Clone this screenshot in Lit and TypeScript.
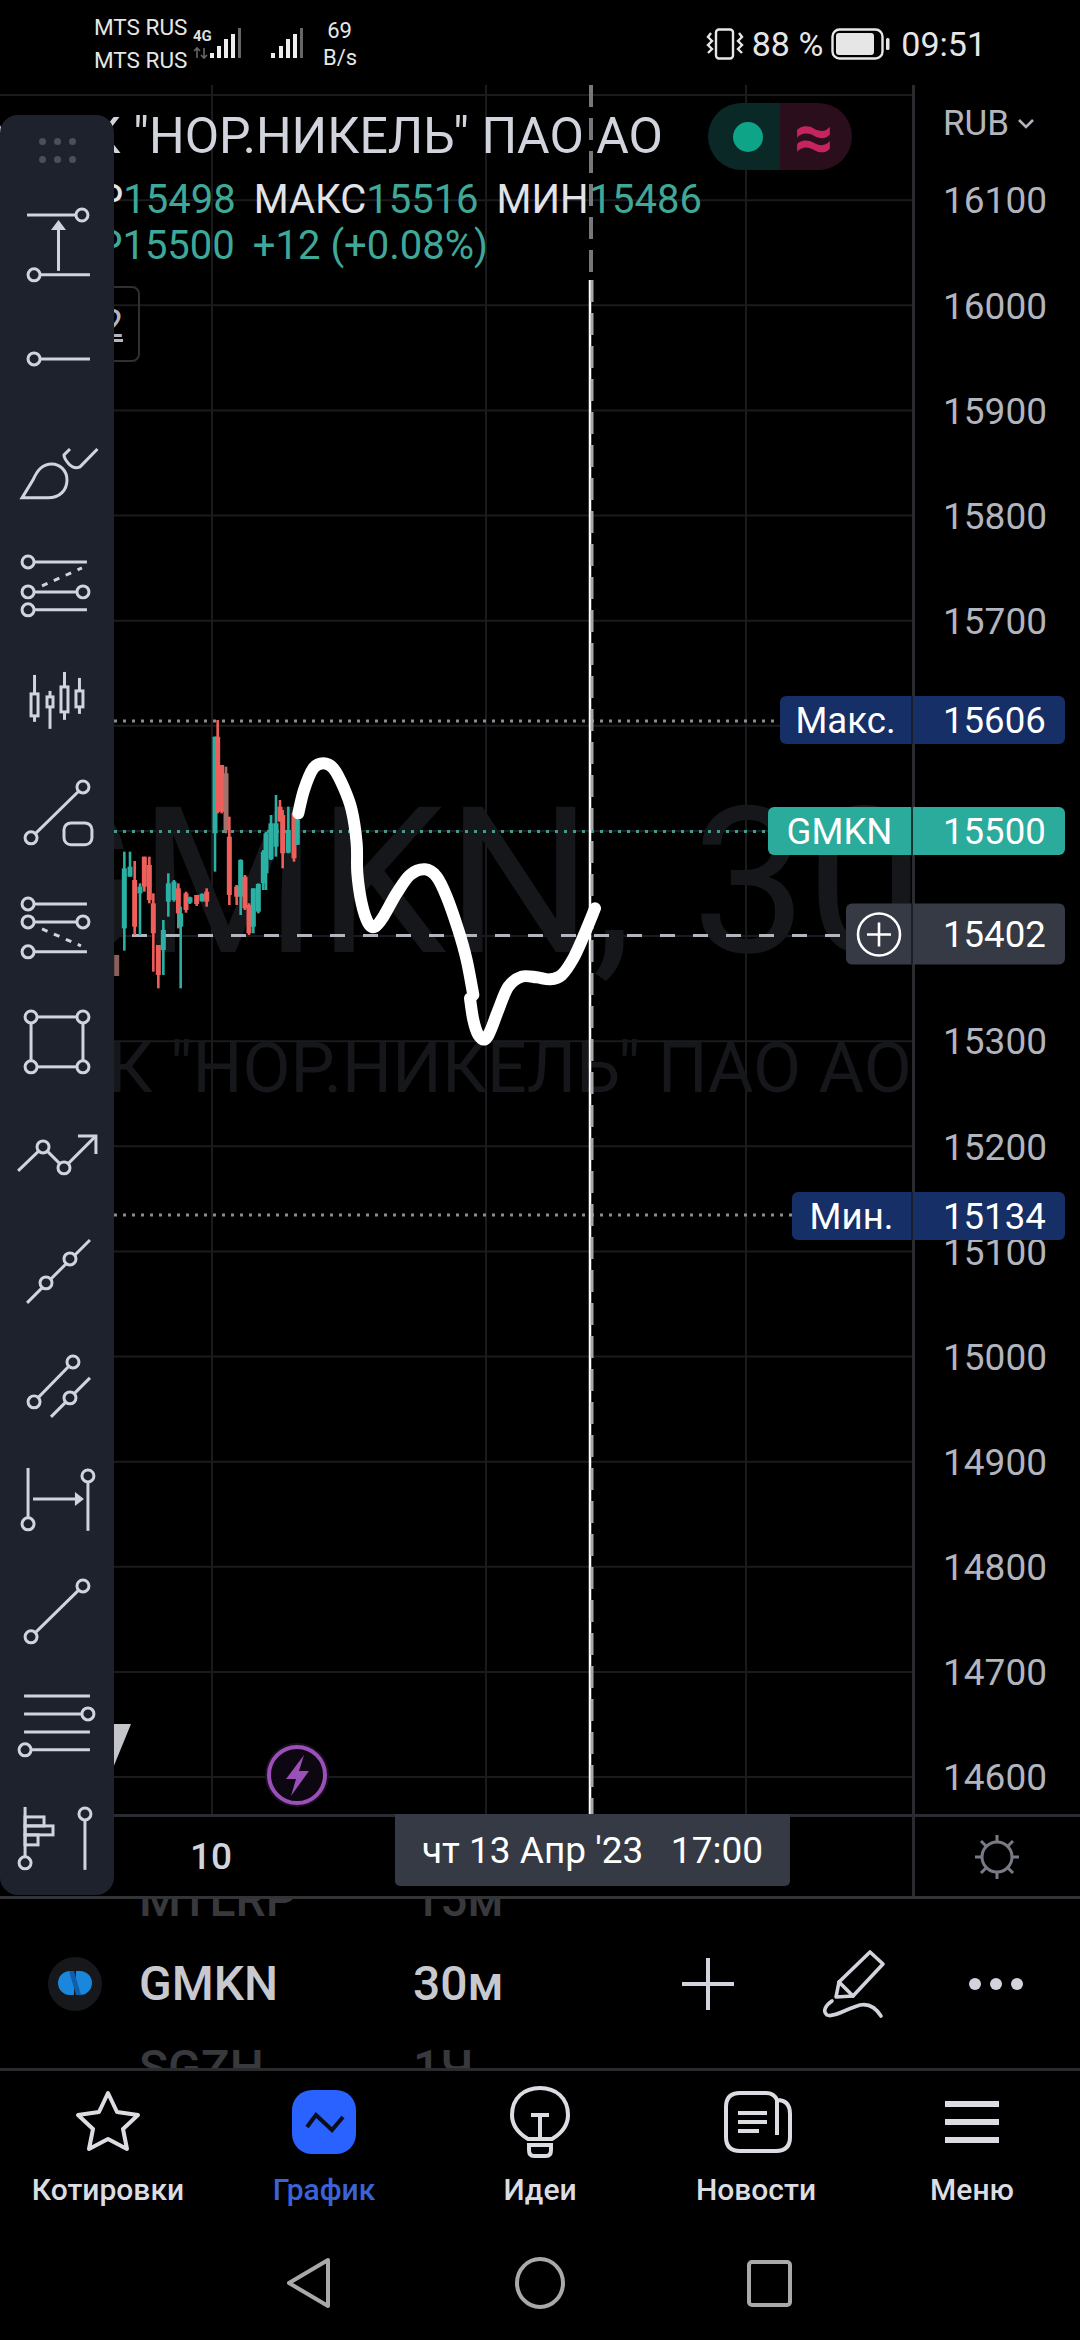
import {LitElement, css, html, svg} from 'lit';
import {customElement} from 'lit/decorators.js';

const PRICES = [16100, 16000, 15900, 15800, 15700, 15600, 15500, 15400, 15300, 15200, 15100, 15000, 14900, 14800, 14700, 14600];
const TEAL = '#2bb0a3';
const RED = '#ee5f5b';

const priceTop = (price: number) => Math.round(200.5 + ((16100 - price) * 105.13) / 100 - 85);

const TAGS = [
	{kind: 'tag-extreme tag-max', label: 'Макс.', price: 15606},
	{kind: 'tag-last', label: 'GMKN', price: 15500},
	{kind: 'tag-extreme tag-min', label: 'Мин.', price: 15134}
];

// x, wick top, wick bottom, body top, body bottom, colour (measured on a 3x crop at 100,700)
const CANDLES: [number, number, number, number, number, string][] = [
	[50, 765, 828, 765, 828, '#8a5f5c'],
	[73, 455, 752, 505, 685, TEAL],
	[90, 455, 530, 500, 530, TEAL],
	[104, 483, 705, 540, 680, RED],
	[120, 550, 705, 560, 580, TEAL],
	[133, 470, 575, 470, 560, RED],
	[148, 470, 610, 495, 600, RED],
	[160, 580, 815, 610, 700, RED],
	[175, 735, 865, 735, 825, RED],
	[190, 660, 825, 690, 750, TEAL],
	[205, 520, 650, 550, 605, TEAL],
	[222, 540, 605, 545, 600, TEAL],
	[235, 550, 685, 565, 640, RED],
	[242, 620, 865, 640, 680, TEAL],
	[258, 575, 638, 580, 630, RED],
	[270, 590, 612, 592, 608, TEAL],
	[290, 585, 618, 585, 612, RED],
	[306, 580, 605, 582, 604, TEAL],
	[320, 565, 620, 575, 605, RED],
	[345, 110, 515, 110, 400, TEAL],
	[353, 60, 340, 110, 335, RED],
	[365, 195, 340, 195, 335, RED],
	[378, 200, 400, 220, 390, '#a5716c'],
	[388, 350, 615, 410, 585, RED],
	[410, 555, 615, 560, 590, RED],
	[422, 478, 645, 480, 590, TEAL],
	[435, 525, 630, 530, 625, RED],
	[447, 610, 705, 615, 700, RED],
	[460, 565, 700, 565, 680, TEAL],
	[475, 550, 640, 552, 635, TEAL],
	[490, 450, 570, 455, 550, TEAL],
	[498, 395, 570, 400, 520, TEAL],
	[513, 345, 480, 370, 478, TEAL],
	[528, 285, 470, 370, 440, TEAL],
	[540, 300, 365, 320, 364, RED],
	[548, 330, 505, 345, 460, RED],
	[565, 320, 460, 390, 458, TEAL],
	[582, 335, 485, 340, 475, RED],
	[592, 350, 435, 360, 434, TEAL]
];

// hand drawn line, two strokes, same crop coordinates
const SCRIBBLE_A: [number, number][] = [[595, 340], [612, 270], [640, 205], [670, 190], [700, 205], [730, 260], [755, 330], [770, 430], [772, 520], [785, 610], [805, 670], [825, 680], [850, 650], [890, 580], [930, 525], [975, 508], [1010, 530], [1040, 590], [1075, 690], [1100, 780], [1120, 885]];
const SCRIBBLE_B: [number, number][] = [[1110, 895], [1120, 960], [1135, 1005], [1155, 1018], [1172, 990], [1195, 930], [1225, 860], [1265, 830], [1310, 832], [1350, 838], [1385, 825], [1420, 775], [1450, 710], [1485, 625]];

const toPage = ([x, y]: [number, number]): [number, number] => [100 + x / 3, 700 + y / 3];

function smoothPath(points: [number, number][]) {
	const p = points.map(toPage);
	let d = `M${p[0][0]} ${p[0][1]}`;
	for (let i = 0; i < p.length - 1; i++) {
		const a = p[Math.max(0, i - 1)];
		const b = p[i];
		const c = p[i + 1];
		const e = p[Math.min(p.length - 1, i + 2)];
		d += `C${b[0] + (c[0] - a[0]) / 6} ${b[1] + (c[1] - a[1]) / 6} ${c[0] - (e[0] - b[0]) / 6} ${c[1] - (e[1] - b[1]) / 6} ${c[0]} ${c[1]}`;
	}
	return d;
}

const dot = (x: number, y: number) => svg`<circle class="dot" cx=${x} cy=${y} r="6"></circle>`;
const ln = (x1: number, y1: number, x2: number, y2: number) => svg`<line x1=${x1} y1=${y1} x2=${x2} y2=${y2}></line>`;

const TOOLS = [
	svg`${ln(27, 27, 76, 27)}${dot(82, 27)}${ln(40, 87, 90, 87)}${dot(34, 87)}${ln(58.5, 83, 58.5, 40)}<path class="solid" d="M58.5 32L66 42H51Z"></path>`,
	svg`${ln(40, 57, 90, 57)}${dot(34, 57)}`,
	svg`<path d="M22 82H48C60 82 67 74 67 64C67 54 59 48 52 48C42 48 37 55 33 64Z"></path><path d="M70 33L64 39Q64 42 68 47Q74 54 80 51L97.5 33"></path>`,
	svg`${ln(34, 33, 87, 33)}${dot(28, 33)}${ln(34, 63, 77, 63)}${dot(28, 63)}${dot(83, 63)}${ln(34, 81, 87, 81)}${dot(28, 81)}<line class="dash" x1="42" y1="57" x2="82" y2="39"></line>`,
	svg`${ln(34.5, 32, 34.5, 51)}${ln(34.5, 73, 34.5, 79)}<rect x="31" y="51" width="7" height="22"></rect>
		${ln(50, 48, 50, 54)}${ln(50, 64, 50, 86)}<rect x="47" y="54" width="6" height="10"></rect>
		${ln(64.5, 29, 64.5, 44)}${ln(64.5, 69, 64.5, 77)}<rect x="61" y="44" width="7" height="25"></rect>
		${ln(79.5, 35, 79.5, 48)}${ln(79.5, 64, 79.5, 71)}<rect x="76" y="48" width="7" height="16"></rect>`,
	svg`${ln(31, 81, 83, 30)}${dot(83, 30)}${dot(31, 81)}<rect x="64" y="66" width="28" height="22" rx="7"></rect>`,
	svg`${ln(34, 33, 87, 33)}${dot(28, 33)}${ln(34, 51, 77, 51)}${dot(28, 51)}${dot(83, 51)}${ln(34, 81, 87, 81)}${dot(28, 81)}<line class="dash" x1="42" y1="58" x2="81" y2="75"></line>`,
	svg`<rect x="31" y="32" width="52" height="50"></rect>${dot(31, 32)}${dot(83, 32)}${dot(31, 82)}${dot(83, 82)}`,
	svg`<path d="M18 73L43 49L64 70L96 38"></path><path d="M78 38H96V56"></path>${dot(43, 49)}${dot(64, 70)}`,
	svg`${ln(27, 91, 90, 28)}${dot(70, 47)}${dot(46, 71)}`,
	svg`${ln(34, 76, 73, 36)}${ln(51, 91, 90, 52)}${dot(73, 36)}${dot(34, 76)}${dot(70, 72)}`,
	svg`${ln(28, 28, 28, 84)}${dot(28, 84)}${ln(88, 91, 88, 36)}${dot(88, 36)}${ln(33, 59, 76, 59)}<path class="solid" d="M75 52L84 59L75 66Z"></path>`,
	svg`${ln(31, 83, 83, 32)}${dot(83, 32)}${dot(31, 83)}`,
	svg`${ln(24, 29, 90, 29)}${ln(24, 47, 82, 47)}${dot(88, 47)}${ln(24, 65, 90, 65)}${ln(31, 83, 90, 83)}${dot(25, 83)}`,
	svg`${ln(25, 26, 25, 82)}${dot(25, 82)}<rect x="25" y="36" width="19" height="9"></rect><rect x="25" y="45" width="28" height="9"></rect><rect x="25" y="54" width="13" height="10"></rect>${ln(85, 33, 85, 89)}${dot(85, 33)}`
];

@customElement('app-root')
export class AppRoot extends LitElement {
	static styles = css`
		:host {
			background: #000;
			color: #d1d4dc;
			display: block;
			font-family: Roboto, 'Noto Sans', sans-serif;
			height: 2340px;
			overflow: hidden;
			position: relative;
			width: 1080px;
		}

		.status {
			align-items: center;
			box-sizing: border-box;
			color: #e6e6e6;
			display: flex;
			height: 85px;
			padding: 2px 94px 0 94px;
		}

		.carrier {
			font-size: 22.5px;
			line-height: 33px;
			white-space: nowrap;
			width: 99px;
		}

		.signal-a {
			height: 36px;
			width: 48px;
		}

		.signal-b {
			height: 36px;
			margin-left: 30px;
			width: 32px;
		}

		.speed {
			font-size: 22px;
			line-height: 27px;
			margin-left: 20px;
			text-align: center;
			width: 33px;
		}

		.status-right {
			align-items: center;
			display: flex;
			font-size: 34px;
			margin-left: auto;
		}

		.vibrate {
			height: 32px;
			margin-right: 8px;
			width: 38px;
		}

		.battery {
			height: 32px;
			margin: 0 11px 0 8px;
			width: 59px;
		}

		.chart {
			display: grid;
			grid-template-columns: 912px 168px;
			height: 1729px;
			overflow: hidden;
			position: relative;
		}

		.plot {
			display: block;
			height: 1729px;
			width: 912px;
		}

		.plot text {
			fill: #15171b;
			font-family: Roboto, sans-serif;
		}

		.axis {
			border-left: 3px solid #2a2b2f;
			box-sizing: border-box;
			color: #b2b5be;
			display: flex;
			flex-direction: column;
			padding-left: 28px;
		}

		.currency {
			align-items: center;
			box-sizing: border-box;
			display: flex;
			flex: none;
			font-size: 35px;
			gap: 8px;
			height: 63.4px;
			padding-top: 14px;
		}

		.currency svg {
			height: 12px;
			width: 18px;
		}

		.price {
			align-items: center;
			display: flex;
			flex: none;
			font-size: 37px;
			height: 105.13px;
		}

		.legend {
			display: flex;
			flex-direction: column;
			left: 0;
			position: absolute;
			top: 23px;
			white-space: nowrap;
		}

		.legend-row {
			display: flex;
			font-size: 40px;
			justify-content: flex-end;
			line-height: 46px;
		}

		.title {
			color: #d1d4dc;
			font-size: 50px;
			line-height: 56px;
			margin-bottom: 13px;
			width: 663px;
		}

		.ohlc {
			color: #e2e3e8;
			width: 702px;
		}

		.change {
			width: 488px;
		}

		.val {
			color: #3fa898;
		}

		.gap {
			margin-left: 18px;
		}

		.gap-min {
			margin-right: 1px;
		}

		.count {
			align-items: center;
			border: 2px solid #2f3034;
			border-radius: 8px;
			box-sizing: border-box;
			color: #b2b5be;
			display: flex;
			font-size: 38px;
			height: 76px;
			justify-content: flex-end;
			left: 60px;
			padding-right: 15px;
			position: absolute;
			text-decoration: underline;
			top: 201px;
			width: 80px;
		}

		.pill {
			border-radius: 34px;
			display: flex;
			height: 67px;
			left: 708px;
			overflow: hidden;
			position: absolute;
			top: 18px;
			width: 144px;
		}

		.pill-open {
			align-items: center;
			background: #0a2825;
			box-sizing: border-box;
			display: flex;
			justify-content: center;
			padding-left: 7px;
			width: 72px;
		}

		.pill-open i {
			background: #0ea488;
			border-radius: 50%;
			height: 30px;
			width: 30px;
		}

		.pill-delay {
			align-items: center;
			background: #2a0e1b;
			box-sizing: border-box;
			color: #c7245f;
			display: flex;
			font-size: 70px;
			font-weight: 700;
			justify-content: center;
			line-height: 1;
			padding-right: 4px;
			width: 72px;
		}

		.tag {
			align-items: center;
			border-radius: 6px;
			color: #fff;
			display: flex;
			font-size: 36.6px;
			height: 48px;
			overflow: hidden;
			position: absolute;
			right: 15px;
			transform: translateY(-50%);
		}

		.tag span {
			align-items: center;
			display: flex;
			height: 100%;
		}

		.tag-label {
			border-right: 2px solid #1b1f2a;
			box-sizing: border-box;
			justify-content: center;
		}

		.tag-value {
			box-sizing: border-box;
			padding-left: 30px;
			width: 152px;
		}

		.tag-extreme {
			background: #162f67;
		}

		.tag-max .tag-label {
			width: 133px;
		}

		.tag-min .tag-label {
			width: 121px;
		}

		.tag-last {
			background: #2aab9b;
		}

		.tag-last .tag-label {
			border-right-color: #11352f;
			width: 145px;
		}

		.tag-cross {
			background: #363a45;
			height: 61px;
		}

		.tag-cross .tag-label {
			width: 67px;
		}

		.tag-cross svg {
			height: 46px;
			width: 46px;
		}

		.time {
			border-bottom: 3px solid #333438;
			border-top: 3px solid #2a2c32;
			box-sizing: border-box;
			display: grid;
			grid-template-columns: 912px 168px;
			height: 85px;
			position: relative;
		}

		.time-plot {
			position: relative;
		}

		.tick {
			color: #d1d4dc;
			font-size: 37px;
			font-weight: 500;
			left: 190px;
			position: absolute;
			top: 18px;
		}

		.cursor-date {
			align-items: center;
			background: #363a45;
			border-radius: 0 0 5px 5px;
			color: #fff;
			display: flex;
			font-size: 37px;
			height: 72px;
			justify-content: center;
			left: 395px;
			position: absolute;
			top: -3px;
			white-space: pre;
			width: 395px;
		}

		.time-side {
			align-items: center;
			border-left: 3px solid #2a2b2f;
			display: flex;
			justify-content: center;
			padding-right: 1px;
		}

		.time-side svg {
			height: 48px;
			width: 48px;
		}

		.tools {
			align-items: center;
			border-bottom: 3px solid #2a2b2f;
			box-sizing: border-box;
			display: flex;
			height: 172px;
			overflow: hidden;
			padding-left: 48px;
			position: relative;
		}

		.logo {
			flex: none;
			height: 54px;
			width: 54px;
		}

		.wheel {
			display: flex;
			flex-direction: column;
			font-size: 48px;
			font-weight: 500;
		}

		.wheel div {
			align-items: center;
			color: #38393c;
			display: flex;
			flex: none;
			height: 84px;
		}

		.wheel .current {
			color: #c8c9cf;
		}

		.wheel-symbols {
			margin-left: 37px;
			width: 274px;
		}

		.wheel-frames {
			width: 269px;
		}

		.tool-actions {
			align-items: center;
			display: flex;
		}

		.tool-actions svg {
			flex: none;
		}

		.action-pen {
			margin-left: 86px;
		}

		.action-more {
			margin-left: 83px;
		}

		.nav {
			box-sizing: border-box;
			display: grid;
			grid-template-columns: repeat(5, 216px);
			height: 161px;
			padding-top: 15px;
		}

		.nav-item {
			align-items: center;
			color: #dcdde2;
			display: flex;
			flex-direction: column;
			font-size: 30px;
			font-weight: 500;
			gap: 14px;
		}

		.nav-item svg {
			display: block;
			height: 72px;
			width: 72px;
		}

		.nav-item.active {
			color: #3a63d8;
		}

		.sys {
			align-items: center;
			display: flex;
			height: 110px;
			justify-content: center;
		}

		.sys svg {
			height: 110px;
			width: 1080px;
		}

		.toolbar {
			background: #1e222d;
			border-radius: 18px;
			display: flex;
			flex-direction: column;
			height: 1780px;
			left: 0;
			position: absolute;
			top: 115px;
			width: 114px;
		}

		.grip {
			align-content: start;
			box-sizing: border-box;
			display: grid;
			flex: none;
			gap: 11px 8px;
			grid-template-columns: repeat(3, 7px);
			height: 73px;
			padding: 23px 0 0 39px;
		}

		.grip i {
			background: #4b4f5a;
			border-radius: 50%;
			height: 7px;
			width: 7px;
		}

		.tool {
			display: block;
			flex: none;
			height: 113.8px;
			width: 114px;
		}

		.tool * {
			fill: none;
			stroke: #d1d4dc;
			stroke-width: 3;
		}

		.tool .dot {
			fill: #1e222d;
		}

		.tool .solid {
			fill: #d1d4dc;
			stroke: none;
		}

		.tool .dash {
			stroke-dasharray: 6 7;
		}
	`;

	private renderPlot() {
		const grid = Array.from({length: 17}, (_, i) => 95 + i * 105.13);
		return html`
			<svg class="plot" viewBox="0 85 912 1729">
				<g stroke="#1a1b1e" stroke-width="2">
					${grid.map((y) => svg`<line x1="0" y1=${y} x2="912" y2=${y}></line>`)}
					${[212, 486, 746].map((x) => svg`<line x1=${x} y1="85" x2=${x} y2="1814"></line>`)}
				</g>
				<text x="-1" y="952" font-size="205" word-spacing="8">GMKN, 30</text>
				<text x="912" y="1092" font-size="70" text-anchor="end">ПАО ГМК "НОР.НИКЕЛЬ" ПАО АО</text>
				<polygon points="113,1724 131,1724 113,1768" fill="#c4c6cc"></polygon>
				<g stroke-width="3">
					<line x1="114" y1="721" x2="780" y2="721" stroke="#8b8d93" stroke-dasharray="3 6"></line>
					<line x1="114" y1="831.5" x2="768" y2="831.5" stroke="#3f9c8f" stroke-dasharray="3 6"></line>
					<line x1="114" y1="1215" x2="792" y2="1215" stroke="#8b8d93" stroke-dasharray="3 6"></line>
					<line x1="132" y1="935.5" x2="846" y2="935.5" stroke="#b2b5be" stroke-dasharray="15 18"></line>
				</g>
				${CANDLES.map(([x, top, bottom, bodyTop, bodyBottom, colour]) => {
					const [px] = toPage([x, 0]);
					return svg`
						<line x1=${px} x2=${px} y1=${700 + top / 3} y2=${700 + bottom / 3} stroke=${colour} stroke-width="2.6"></line>
						<rect x=${px - 2.5} width="5" y=${700 + bodyTop / 3} height=${(bodyBottom - bodyTop) / 3} fill=${colour}></rect>
					`;
				})}
				<line x1="591" y1="85" x2="591" y2="280" stroke="#77787c" stroke-width="4" stroke-dasharray="22 11"></line>
				<line x1="590" y1="280" x2="590" y2="1814" stroke="#fff" stroke-width="2.5"></line>
				<line x1="592" y1="280" x2="592" y2="1814" stroke="#a5a6a9" stroke-width="3" stroke-dasharray="22 11"></line>
				<g fill="none" stroke="#fff" stroke-width="12" stroke-linecap="round" stroke-linejoin="round">
					<path d=${smoothPath(SCRIBBLE_A)}></path>
					<path d=${smoothPath(SCRIBBLE_B)}></path>
				</g>
				<circle cx="297" cy="1775" r="32" fill="#1a0f20"></circle>
				<circle cx="297" cy="1775" r="28" fill="#0c0710" stroke="#9b4fb8" stroke-width="4"></circle>
				<path d="M304 1755L286 1779H296L291 1796L309 1771H299Z" fill="#9b4fb8"></path>
			</svg>
		`;
	}

	private renderStatus() {
		return html`
			<div class="status">
				<div class="carrier">MTS RUS<br />MTS RUS</div>
				<svg class="signal-a" viewBox="0 0 48 36">
					<text x="0" y="15" font-size="15" font-weight="700" fill="#ddd" font-family="Roboto, sans-serif">4G</text>
					<path d="M4 32V22M1 25L4 22L7 25M11 22V32M8 29L11 32L14 29" fill="none" stroke="#666" stroke-width="1.6"></path>
					<g fill="#eee">
						<rect x="17" y="27" width="4" height="5"></rect>
						<rect x="24" y="20" width="4" height="12"></rect>
						<rect x="31" y="13" width="4" height="19"></rect>
						<rect x="38" y="8" width="4" height="24"></rect>
					</g>
					<rect x="45" y="2" width="3" height="30" fill="#666"></rect>
				</svg>
				<svg class="signal-b" viewBox="0 0 32 36">
					<g fill="#eee">
						<rect x="0" y="27" width="4" height="5"></rect>
						<rect x="8" y="20" width="4" height="12"></rect>
						<rect x="15" y="13" width="4" height="19"></rect>
						<rect x="22" y="8" width="4" height="24"></rect>
					</g>
					<rect x="29" y="2" width="3" height="30" fill="#666"></rect>
				</svg>
				<div class="speed">69<br />B/s</div>
				<div class="status-right">
					<svg class="vibrate" viewBox="0 0 38 32" fill="none" stroke="#e6e6e6" stroke-width="2.4">
						<rect x="10" y="1.5" width="17" height="29" rx="3"></rect>
						<path d="M5 5L2 9L6 13L2 17L6 21L2 25M33 5L36 9L32 13L36 17L32 21L36 25"></path>
					</svg>
					<span>88 %</span>
					<svg class="battery" viewBox="0 0 59 32">
						<rect x="1.5" y="1.5" width="50" height="29" rx="7" fill="none" stroke="#e6e6e6" stroke-width="2.4"></rect>
						<rect x="5" y="5" width="38" height="22" rx="3" fill="#e6e6e6"></rect>
						<rect x="55" y="10" width="3.5" height="12" rx="1.5" fill="#e6e6e6"></rect>
					</svg>
					<span>09:51</span>
				</div>
			</div>
		`;
	}

	private renderTools() {
		return html`
			<div class="tools">
				<svg class="logo" viewBox="0 0 54 54">
					<circle cx="27" cy="27" r="27" fill="#16181c"></circle>
					<path d="M22 14A12 12 0 0 0 22 38H26V24L32 38A12 12 0 0 0 32 14H28V28L24 14Z" fill="#1a86dc"></path>
					<path d="M21 14H26L33 38H28Z" fill="#0f5fa8"></path>
				</svg>
				<div class="wheel wheel-symbols">
					<div>MTLRP</div>
					<div class="current">GMKN</div>
					<div>SGZH</div>
				</div>
				<div class="wheel wheel-frames">
					<div>15м</div>
					<div class="current">30м</div>
					<div>1Ч</div>
				</div>
				<div class="tool-actions">
					<svg width="52" height="52" viewBox="0 0 52 52" stroke="#d1d4dc" stroke-width="4"><path d="M0 26H52M26 0V52"></path></svg>
					<svg class="action-pen" width="66" height="72" viewBox="820 1945 66 72" fill="none" stroke="#d1d4dc" stroke-width="3.6" stroke-linejoin="round" stroke-linecap="round">
						<path d="M870 1949L883 1961L853 1993L836 1994L839 1979Z"></path>
						<path d="M839 1979L853 1993"></path>
						<path d="M832 1998C826 2002 822 2008 827 2012C833 2015 846 2006 860 2002C870 2000 876 2005 881 2013"></path>
					</svg>
					<svg class="action-more" width="54" height="12" viewBox="0 0 54 12" fill="#d1d4dc">
						<circle cx="6" cy="6" r="6"></circle><circle cx="27" cy="6" r="6"></circle><circle cx="48" cy="6" r="6"></circle>
					</svg>
				</div>
			</div>
		`;
	}

	private renderNav() {
		return html`
			<div class="nav">
				<div class="nav-item">
					<svg viewBox="0 0 72 72" fill="none" stroke="#dcdde2" stroke-width="4" stroke-linejoin="round">
						<path d="M36 7L45 26L66 29L51 43L55 63L36 53L17 63L21 43L6 29L27 26Z"></path>
					</svg>
					Котировки
				</div>
				<div class="nav-item active">
					<svg viewBox="0 0 72 72">
						<rect x="4" y="4" width="64" height="64" rx="20" fill="#2962ff"></rect>
						<path d="M19 41L28 29L44 44L55 31" fill="none" stroke="#0b0f1c" stroke-width="4"></path>
					</svg>
					График
				</div>
				<div class="nav-item">
					<svg viewBox="0 0 72 72" fill="none" stroke="#dcdde2" stroke-width="4">
						<path d="M24 53C14 47 8 39 8 29C8 12 20 2 36 2C52 2 64 12 64 29C64 39 58 47 48 53Z"></path>
						<path d="M27 29H45M36 29V53"></path>
						<path d="M25 59H47V64Q47 70 42 70H30Q25 70 25 64Z"></path>
					</svg>
					Идеи
				</div>
				<div class="nav-item">
					<svg viewBox="0 0 72 72" fill="none" stroke="#dcdde2" stroke-width="4">
						<path d="M20 7H46Q54 7 57 14Q70 14 70 28V51Q70 65 56 65H20Q6 65 6 51V21Q6 7 20 7Z"></path>
						<path d="M57 14V49M18 27H47M18 36H47M18 45H39"></path>
					</svg>
					Новости
				</div>
				<div class="nav-item">
					<svg viewBox="0 0 72 72" fill="#dcdde2">
						<rect x="9" y="15" width="54" height="6"></rect>
						<rect x="9" y="33" width="54" height="6"></rect>
						<rect x="9" y="51" width="54" height="6"></rect>
					</svg>
					Меню
				</div>
			</div>
		`;
	}

	render() {
		return html`
			${this.renderStatus()}
			<div class="chart">
				${this.renderPlot()}
				<div class="axis">
					<div class="currency">
						RUB
						<svg viewBox="0 0 18 12" fill="none" stroke="#b2b5be" stroke-width="2.6"><path d="M2 2L9 9L16 2"></path></svg>
					</div>
					${PRICES.map((p) => html`<div class="price">${p}</div>`)}
				</div>
				<div class="legend">
					<div class="legend-row title">ПАО ГМК "НОР.НИКЕЛЬ" ПАО АО</div>
					<div class="legend-row ohlc">
						ОТКР<span class="val">15498</span>
						<span class="gap">МАКС</span><span class="val">15516</span>
						<span class="gap gap-min">МИН</span><span class="val">15486</span>
					</div>
					<div class="legend-row change val">
						ЗАКР15500<span class="gap">+12 (+0.08%)</span>
					</div>
				</div>
				<div class="count">12</div>
				<div class="pill">
					<div class="pill-open"><i></i></div>
					<div class="pill-delay">≈</div>
				</div>
				${TAGS.map(
					(tag) => html`
						<div class="tag ${tag.kind}" style="top:${priceTop(tag.price)}px">
							<span class="tag-label">${tag.label}</span><span class="tag-value">${tag.price}</span>
						</div>
					`
				)}
				<div class="tag tag-cross" style="top:${priceTop(15402)}px">
					<span class="tag-label">
						<svg viewBox="0 0 46 46" fill="none" stroke="#fff" stroke-width="2.6">
							<circle cx="23" cy="23" r="21"></circle>
							<path d="M11 23H35M23 11V35"></path>
						</svg>
					</span>
					<span class="tag-value">15402</span>
				</div>
			</div>
			<div class="time">
				<div class="time-plot">
					<div class="tick">10</div>
					<div class="cursor-date">чт 13 Апр '23   17:00</div>
				</div>
				<div class="time-side">
					<svg viewBox="0 0 48 48" fill="none" stroke="#787b86" stroke-width="3">
						<circle cx="24" cy="24" r="15"></circle>
						<path d="M24 2V9M24 39V46M2 24H9M39 24H46M8 8L13 13M35 35L40 40M8 40L13 35M35 13L40 8"></path>
					</svg>
				</div>
			</div>
			${this.renderTools()}
			${this.renderNav()}
			<div class="sys">
				<svg viewBox="0 2230 1080 110" fill="none" stroke="#a9a9a9" stroke-width="4" stroke-linejoin="round">
					<path d="M328 2258V2304L289 2281Z"></path>
					<ellipse cx="540" cy="2281" rx="23" ry="24"></ellipse>
					<rect x="749" y="2260" width="41" height="43" rx="3"></rect>
				</svg>
			</div>
			<div class="toolbar">
				<div class="grip">${Array.from({length: 6}, () => html`<i></i>`)}</div>
				${TOOLS.map((icon) => html`<svg class="tool" viewBox="0 0 114 114">${icon}</svg>`)}
			</div>
		`;
	}
}
